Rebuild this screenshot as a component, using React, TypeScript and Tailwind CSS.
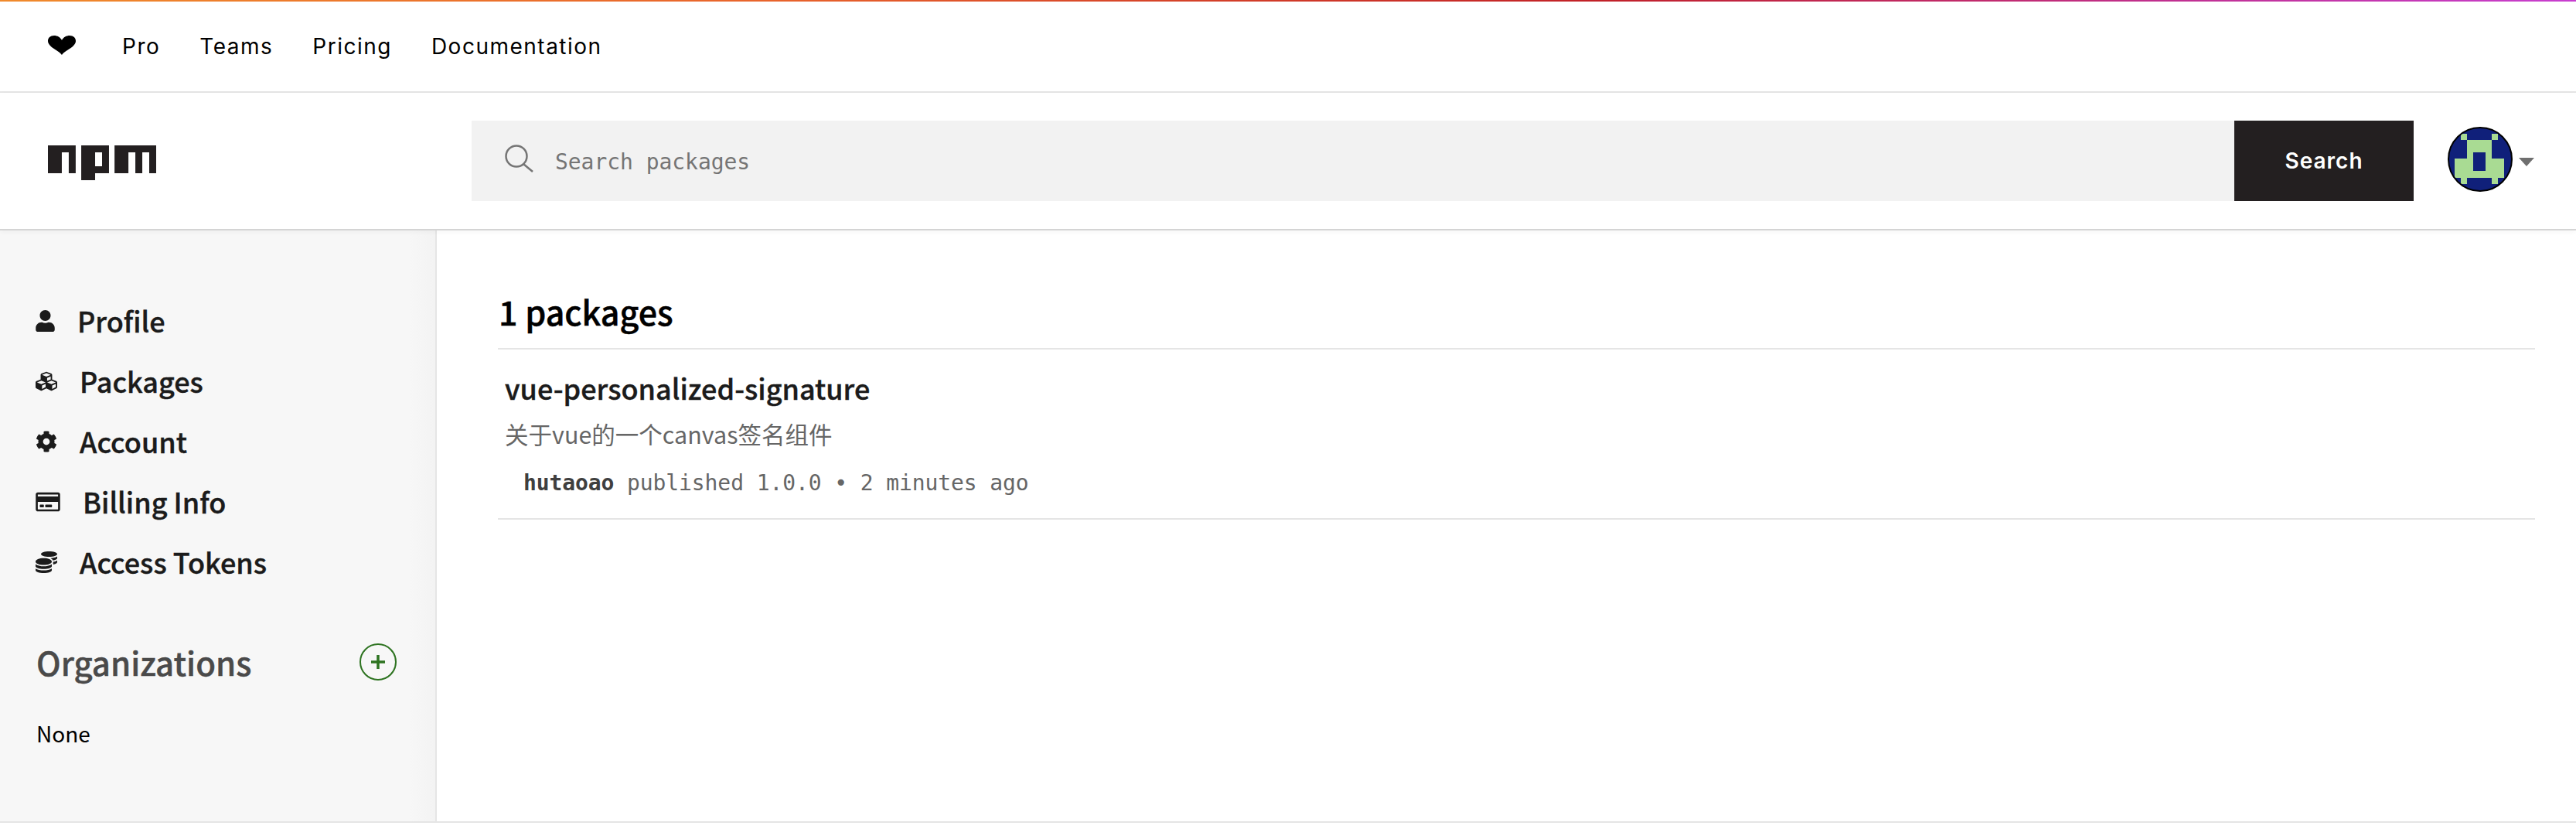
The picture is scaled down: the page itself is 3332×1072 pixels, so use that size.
import { FaCog, FaCoins, FaCubes, FaRegCreditCard, FaUser } from "react-icons/fa";

const sideLinks = [
  { label: "Profile", icon: FaUser, iconWidth: "w-[25px]" },
  { label: "Packages", icon: FaCubes, iconWidth: "w-[28px]" },
  { label: "Account", icon: FaCog, iconWidth: "w-[28px]" },
  { label: "Billing Info", icon: FaRegCreditCard, iconWidth: "w-[32px]" },
  { label: "Access Tokens", icon: FaCoins, iconWidth: "w-[28px]" },
];

function NpmLogo() {
  return (
    <svg viewBox="0 0 780 250" className="w-[140px] h-[45px]" fill="#231f20">
      <path d="M240,250h100v-50h100V0H240V250z M340,50h50v100h-50V50z M480,0v200h100V50h50v150h50V50h50v150h50V0H480z M0,200h100V50h50v150h50V0H0V200z" />
    </svg>
  );
}

function Avatar() {
  return (
    <svg viewBox="0 0 84 84" className="w-[84px] h-[84px]">
      <circle cx="42" cy="42" r="41" fill="#10207a" stroke="#000" strokeWidth="2" />
      <clipPath id="avatar-clip">
        <circle cx="42" cy="42" r="40" />
      </clipPath>
      <g fill="#a9db93" clipPath="url(#avatar-clip)">
        <rect x="17" y="9" width="8" height="8" />
        <rect x="57" y="9" width="8" height="8" />
        <rect x="25" y="17" width="32" height="24" />
        <rect x="9" y="41" width="64" height="25" />
        <rect x="17" y="66" width="8" height="8" />
        <rect x="57" y="66" width="8" height="8" />
      </g>
      <rect x="33" y="33" width="16" height="24" fill="#10207a" />
    </svg>
  );
}

export default function App() {
  return (
    <div className="h-[1072px] w-full bg-white overflow-hidden font-['Noto_Sans_CJK_SC',sans-serif]">
      <div className="h-[2px] bg-[linear-gradient(90deg,#f08a2c_0%,#e8642c_30%,#c12127_62%,#c0308f_84%,#c83fd0_100%)]" />

      {/* top links */}
      <div className="h-[118px] border-b-2 border-[#e5e5e5] flex items-center pl-[62px] font-['Inter',sans-serif] text-[28px] tracking-[1.5px] text-black">
        <svg viewBox="0 0 36 25" className="w-[36px] h-[25px] mr-[60px] -mt-1" fill="#000">
          <path d="M18 25C14 19 0 15 0 7C0 3 3 0 8 0C12 0 16 2 18 6C20 2 24 0 28 0C33 0 36 3 36 7C36 15 22 19 18 25Z" />
        </svg>
        <nav className="flex items-center gap-[51px]">
          <a>Pro</a>
          <a>Teams</a>
          <a>Pricing</a>
          <a>Documentation</a>
        </nav>
      </div>

      {/* search bar */}
      <header className="relative z-10 h-[178px] border-b-2 border-[#d4d4d4] shadow-[0_2px_6px_rgba(0,0,0,0.04)] flex items-center pl-[62px] pr-[54px]">
        <div className="w-[548px] shrink-0 mt-[5px]">
          <NpmLogo />
        </div>
        <form className="flex h-[104px] flex-1">
          <div className="flex flex-1 items-center bg-[#f2f2f2] pl-[43px]">
            <svg viewBox="0 0 37 36" className="w-[37px] h-[36px] -mt-[6px]" fill="none" stroke="#757575" strokeWidth="2.5">
              <circle cx="15" cy="15" r="13.5" />
              <path d="M24 25L36 35" />
            </svg>
            <span className="ml-[28px] mt-[4px] font-['DejaVu_Sans_Mono',monospace] text-[28px] tracking-[-0.05px] text-[#757575]">
              Search packages
            </span>
          </div>
          <button className="w-[232px] bg-[#231f20] text-white font-['Inter',sans-serif] font-semibold text-[28px] tracking-[1px]">
            Search
          </button>
        </form>
        <div className="ml-[44px] flex items-center gap-[8px] -mt-[4px]">
          <Avatar />
          <span className="w-0 h-0 border-x-[10px] border-x-transparent border-t-[11px] border-t-[#6f6f6f] mt-[6px]" />
        </div>
      </header>

      <div className="flex h-[766px] border-b-2 border-[#e5e5e5]">
        {/* sidebar */}
        <aside className="w-[565px] shrink-0 border-r-2 border-[#e5e5e5] bg-[linear-gradient(90deg,#f7f7f7_94%,#f3f3f3_100%)] pt-[81px] pl-[46px] pr-[50px]">
          <ul>
            {sideLinks.map(({ label, icon: Icon, iconWidth }) => (
              <li key={label} className="h-[78px] flex items-center gap-[29px] text-[36px] font-medium [-webkit-text-stroke:0.4px_currentColor] text-[#1b1b1b]">
                <Icon className={`${iconWidth} h-[28px] shrink-0 -mt-[6px]`} />
                <span className="-mt-[8px]">{label}</span>
              </li>
            ))}
          </ul>
          <div className="mt-[59px] flex items-center justify-between">
            <h2 className="text-[42px] leading-[56px] font-medium [-webkit-text-stroke:0.4px_currentColor] text-[#4a4a4a] pl-[1px]">Organizations</h2>
            <span className="w-[48px] h-[48px] rounded-full border-2 border-[#2d7320] flex items-center justify-center">
              <svg viewBox="0 0 20 20" className="w-[20px] h-[20px]" stroke="#2d7320" strokeWidth="3.5">
                <path d="M10 1V19M1 10H19" />
              </svg>
            </span>
          </div>
          <p className="mt-[43px] pl-[1px] text-[28px] leading-[42px] text-black">None</p>
        </aside>

        {/* package list */}
        <main className="flex-1 pl-[79px] pr-[53px]">
          <h1 className="pt-[74px] pb-[18px] pl-[1px] border-b-2 border-[#e5e5e5] text-[43px] leading-[60px] font-medium [-webkit-text-stroke:0.5px_currentColor] text-black">
            1 packages
          </h1>
          <section className="pt-[24px] pb-[25px] border-b-2 border-[#e5e5e5]">
            <h3 className="pl-[9px] text-[36px] leading-[50px] font-medium [-webkit-text-stroke:0.4px_currentColor] text-[#1b1b1b]">vue-personalized-signature</h3>
            <p className="mt-[13px] pl-[9px] text-[30.5px] leading-[44px] text-[#666]">关于vue的一个canvas签名组件</p>
            <p className="mt-[22px] pl-[33px] font-['DejaVu_Sans_Mono','Noto_Sans_CJK_SC',monospace] text-[28px] leading-[40px] tracking-[-0.1px] text-[#666]">
              <span className="font-bold text-[#3f3f3f]">hutaoao</span> published 1.0.0 • 2 minutes ago
            </p>
          </section>
        </main>
      </div>
    </div>
  );
}
